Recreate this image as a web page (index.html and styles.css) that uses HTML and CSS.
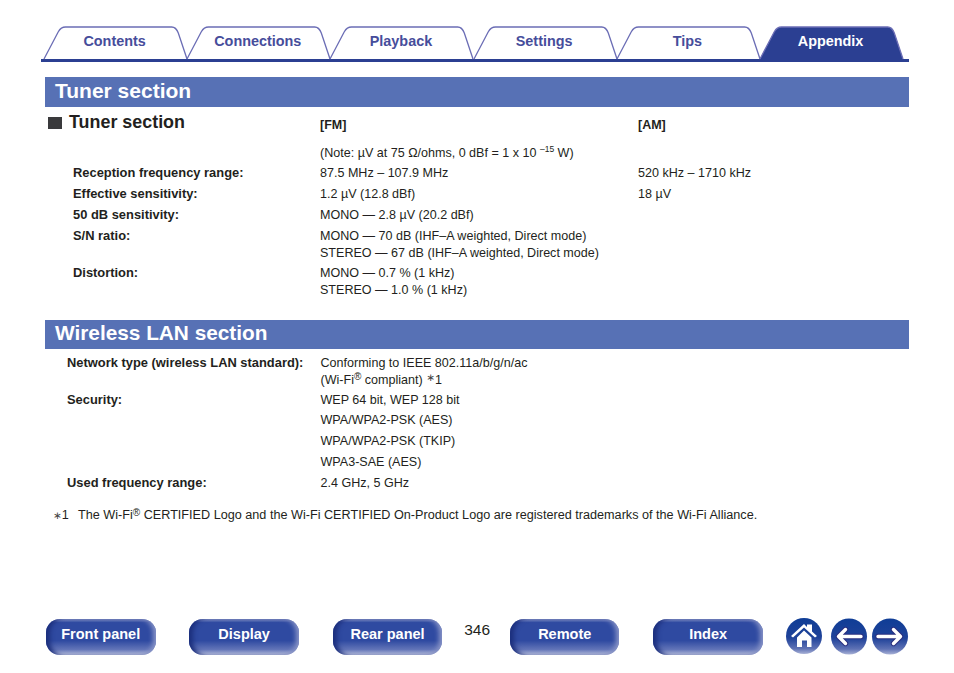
FILE: index.html
```html
<!DOCTYPE html>
<html lang="en">
<head>
<meta charset="utf-8">
<title>Tuner section</title>
<link rel="stylesheet" href="styles.css">
</head>
<body>
<nav class="tabs">
  <a class="tab"><svg class="tab-shape" viewBox="0 0 146 34"><path d="M0 33 L14.3 5.7 Q17 1 21.5 1 L127.7 1 Q132 1 134.3 7 L143 33"/></svg><span>Contents</span></a>
  <a class="tab"><svg class="tab-shape" viewBox="0 0 146 34"><path d="M0 33 L14.3 5.7 Q17 1 21.5 1 L127.7 1 Q132 1 134.3 7 L143 33"/></svg><span>Connections</span></a>
  <a class="tab"><svg class="tab-shape" viewBox="0 0 146 34"><path d="M0 33 L14.3 5.7 Q17 1 21.5 1 L127.7 1 Q132 1 134.3 7 L143 33"/></svg><span>Playback</span></a>
  <a class="tab"><svg class="tab-shape" viewBox="0 0 146 34"><path d="M0 33 L14.3 5.7 Q17 1 21.5 1 L127.7 1 Q132 1 134.3 7 L143 33"/></svg><span>Settings</span></a>
  <a class="tab"><svg class="tab-shape" viewBox="0 0 146 34"><path d="M0 33 L14.3 5.7 Q17 1 21.5 1 L127.7 1 Q132 1 134.3 7 L143 33"/></svg><span>Tips</span></a>
  <a class="tab tab-active"><svg class="tab-shape" viewBox="0 0 146 34"><path d="M0 33 L14.3 5.7 Q17 1 21.5 1 L127.7 1 Q132 1 134.3 7 L143 33"/></svg><span>Appendix</span></a>
</nav>

<main class="content">
  <h1 class="band">Tuner section</h1>
  <div class="tuner-head">
    <h2 class="sub"><i class="sq"></i>Tuner section</h2>
    <b class="col-fm">[FM]</b>
    <b class="col-am">[AM]</b>
  </div>
  <div class="spec tuner">
    <div class="sp"></div><div class="v note">(Note: µV at 75 Ω/ohms, 0 dBf = 1 x 10 <sup class="exp">–15</sup> W)</div><div></div>
    <b class="l">Reception frequency range:</b><div class="v">87.5 MHz – 107.9 MHz</div><div class="v">520 kHz – 1710 kHz</div>
    <b class="l">Effective sensitivity:</b><div class="v">1.2 µV (12.8 dBf)</div><div class="v">18 µV</div>
    <b class="l">50 dB sensitivity:</b><div class="v">MONO — 2.8 µV (20.2 dBf)</div><div></div>
    <b class="l">S/N ratio:</b><div class="v tight">MONO — 70 dB (IHF–A weighted, Direct mode)<br>STEREO — 67 dB (IHF–A weighted, Direct mode)</div><div></div>
    <b class="l">Distortion:</b><div class="v">MONO — 0.7 % (1 kHz)<br>STEREO — 1.0 % (1 kHz)</div><div></div>
  </div>

  <h1 class="band band-2">Wireless LAN section</h1>
  <div class="spec wlan">
    <b class="l">Network type (wireless LAN standard):</b><div class="v tight">Conforming to IEEE 802.11a/b/g/n/ac<br>(Wi-Fi<sup class="reg">®</sup> compliant) <span class="ast raised">∗</span>1</div>
    <b class="l">Security:</b><div class="v tight">WEP 64 bit, WEP 128 bit</div>
    <span></span><div class="v">WPA/WPA2-PSK (AES)</div>
    <span></span><div class="v">WPA/WPA2-PSK (TKIP)</div>
    <span></span><div class="v">WPA3-SAE (AES)</div>
    <b class="l">Used frequency range:</b><div class="v">2.4 GHz, 5 GHz</div>
  </div>
  <p class="foot"><span class="foot-mark"><span class="ast">∗</span>1</span>The Wi-Fi<sup class="reg reg-low">®</sup> CERTIFIED Logo and the Wi-Fi CERTIFIED On-Product Logo are registered trademarks of the Wi-Fi Alliance.</p>
</main>

<footer class="bottom">
  <a class="pill">Front panel</a>
  <a class="pill">Display</a>
  <a class="pill pill-last">Rear panel</a>
  <span class="page">346</span>
  <a class="pill">Remote</a>
  <a class="pill pill-last">Index</a>
  <div class="round-group">
    <svg class="round round-home" viewBox="0 0 36 36"><defs><linearGradient id="rg" x1="0" y1="0" x2="0" y2="1"><stop offset="0" stop-color="#0f3d96"/><stop offset=".55" stop-color="#1f4299"/><stop offset=".85" stop-color="#5f72b5"/><stop offset="1" stop-color="#a9b2d6"/></linearGradient></defs><circle cx="18" cy="18" r="18" fill="url(#rg)"/><path d="M5 18 L18 6 L21 9 V6.5 H26 V13.5 L31 18 L29 19.5 L18 9.5 L7 19.5 Z" fill="#fff"/><path d="M11 19.5 L18 12.5 L25.5 19.5 V29 H21 V22.5 H16 V29 H11 Z" fill="#fff"/></svg>
    <svg class="round" viewBox="0 0 36 36"><circle cx="18" cy="18.5" r="18" fill="url(#rg)"/><path d="M30 18.5 L8 18.5 M14.5 11.5 L7.5 18.5 L14.5 25.5" fill="none" stroke="#2a2f7f" stroke-width="5.4" stroke-linecap="round" stroke-linejoin="round"/><path d="M30 18.5 L8 18.5 M14.5 11.5 L7.5 18.5 L14.5 25.5" fill="none" stroke="#fff" stroke-width="3.4" stroke-linecap="round" stroke-linejoin="round"/></svg>
    <svg class="round" viewBox="0 0 36 36"><circle cx="18" cy="18.5" r="18" fill="url(#rg)"/><path d="M6 18.5 L28 18.5 M21.5 11.5 L28.5 18.5 L21.5 25.5" fill="none" stroke="#2a2f7f" stroke-width="5.4" stroke-linecap="round" stroke-linejoin="round"/><path d="M6 18.5 L28 18.5 M21.5 11.5 L28.5 18.5 L21.5 25.5" fill="none" stroke="#fff" stroke-width="3.4" stroke-linecap="round" stroke-linejoin="round"/></svg>
  </div>
</footer>
</body>
</html>
```
FILE: styles.css
```css
* { box-sizing: border-box; }
html, body { margin: 0; padding: 0; }
body {
  width: 954px;
  height: 673px;
  position: relative;
  background: #fff;
  color: #231f20;
  font-family: "Liberation Sans", Arial, sans-serif;
  font-size: 12.55px;
  overflow: hidden;
}
.tabs {
  margin: 26px 45px 0 41px;
  height: 36px;
  display: flex;
  padding-left: 3px;
  border-bottom: 3px solid #2b3f92;
}
.tab {
  position: relative;
  width: 143.2px;
  height: 33px;
  display: flex;
  align-items: center;
  justify-content: center;
  padding: 0 2px 4px 0;
  color: #464d9b;
  font-weight: 700;
  font-size: 14.4px;
}
.tab span { position: relative; }
.tab-shape {
  position: absolute;
  left: 0;
  top: 0;
  width: 146px;
  height: 34px;
  overflow: visible;
}
.tab-shape path { fill: none; stroke: #6b6db5; stroke-width: 1.3; }
.tab-active { color: #fff; }
.tab-active .tab-shape path { fill: #2b3f92; }
.content { margin: 15px 45px 0; }
.band {
  margin: 0;
  height: 30px;
  padding-left: 10px;
  background: #5771b5;
  color: #fff;
  font-size: 21px;
  font-weight: 700;
  line-height: 28px;
}
.band-2 { margin-top: 21px; height: 29px; font-size: 20.8px; line-height: 26px; }
.tuner-head {
  display: grid;
  grid-template-columns: 275px 318px 1fr;
  height: 30px;
  align-items: start;
}
.sub {
  margin: 4px 0 0 3px;
  font-size: 17.9px;
  line-height: 22px;
  font-weight: 700;
  display: flex;
  align-items: center;
}
.sq { width: 14px; height: 12px; background: #3a3a3c; margin: 1px 7px 0 0; }
.col-fm, .col-am { font-size: 12.5px; margin-top: 11px; line-height: 15px; }
.spec { display: grid; line-height: 17px; }
.tuner { grid-template-columns: 247px 318px 1fr; padding-left: 28px; row-gap: 4px; margin-top: 7px; }
.wlan { grid-template-columns: 253.5px 1fr; padding-left: 22px; margin-top: 6px; row-gap: 4px; }
.tight { margin-bottom: -1px; }
.note { padding-top: 1px; margin-bottom: -1px; }
.l { font-size: 12.9px; margin-top: -1px; }
.exp { font-size: 8.5px; line-height: 0; vertical-align: 5px; }
.reg { font-size: 10px; line-height: 0; vertical-align: 4px; }
.reg-low { vertical-align: 3px; }
.ast { font-family: "DejaVu Sans", sans-serif; font-size: 10.5px; line-height: 0; color: #444; }
.raised { position: relative; top: -3px; }
.foot { margin: 15px 0 0 8px; line-height: 17px; font-size: 12.65px; }
.foot-mark { display: inline-block; width: 25px; }
.bottom {
  position: absolute;
  left: 46px;
  top: 619px;
  width: 862px;
  display: flex;
  align-items: flex-start;
}
.pill {
  width: 109.5px;
  height: 36px;
  border-radius: 14px;
  display: flex;
  align-items: center;
  justify-content: center;
  padding-bottom: 6px;
  color: #fff;
  font-weight: 700;
  font-size: 14.5px;
  background: linear-gradient(180deg, #7f8cc4 0%, #2f4aa1 10%, #2f4aa1 60%, #6375b8 85%, #c0c6e0 100%);
  box-shadow: inset 6px 0 5px -2px #1c2f7c, inset -5px 0 5px -2px #8b96c8;
  margin-right: 33.9px;
}
.pill-last { margin-right: 0; }
.page { width: 67.7px; padding-left: 2px; text-align: center; font-size: 15.5px; line-height: 22px; }
.round-group { display: flex; gap: 5px; margin: -1px 0 0 auto; }
.round-home { margin-right: 4px; }
.round { width: 36px; height: 36px; display: block; overflow: visible; }
```
